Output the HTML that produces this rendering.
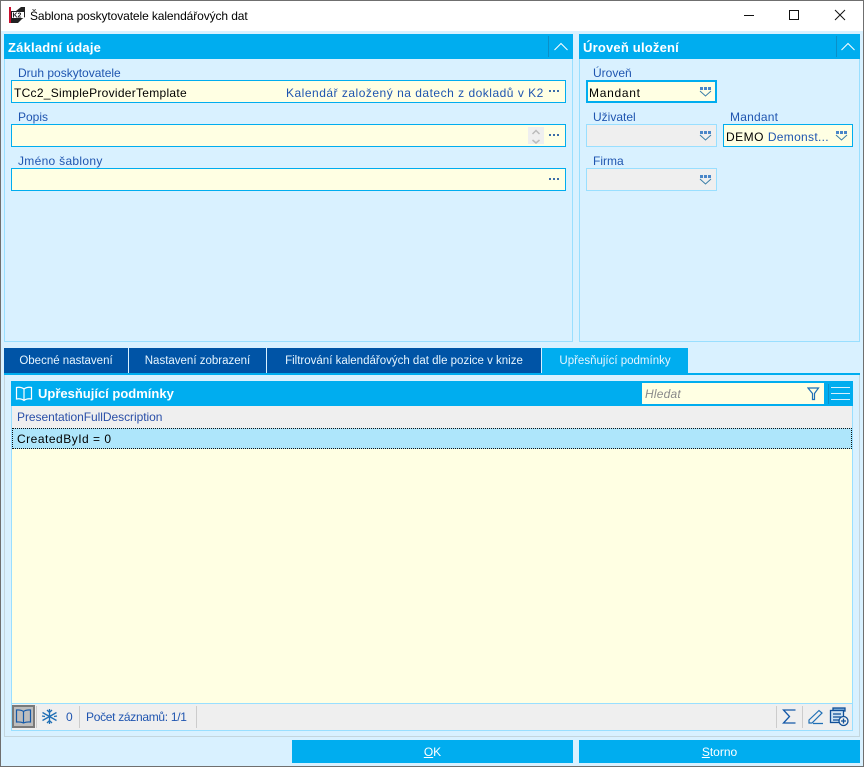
<!DOCTYPE html>
<html><head><meta charset="utf-8"><style>
*{box-sizing:border-box;margin:0;padding:0}
html,body{width:864px;height:767px;overflow:hidden;background:#d9f1ff}
body{position:relative;font-family:"Liberation Sans",sans-serif;font-size:12px;color:#000}
.a,.t,.l,svg.i{position:absolute}
.t{white-space:nowrap;line-height:16px;height:16px}
.l{white-space:nowrap;line-height:16px;height:16px;color:#1f55b0;letter-spacing:0}
.hd{position:absolute;background:#00adef;top:34px;height:25px}
.hd b{position:absolute;left:4px;top:5px;color:#fff;font-size:13px;line-height:17px;letter-spacing:.2px;white-space:nowrap}
.panel{position:absolute;border:1px solid #99dfff;border-top:0;top:59px;height:283px}
.in{position:absolute;background:#ffffe3;border:1px solid #00adef;height:23px}
.dis{background:#efefef;border-color:#99dfff}
.tab{position:absolute;top:348px;height:25px;background:#0054a6;color:#e6f5ff;text-align:center;line-height:26px;letter-spacing:0;white-space:nowrap;font-size:11.5px}
.btn{position:absolute;top:740px;height:23px;background:#00adef;color:#fff;text-align:center;line-height:24px;letter-spacing:0}
</style></head><body>
<div class="a" style="left:0;top:0;width:864px;height:31px;background:#fff"></div>
<div class="a" style="left:0;top:0;width:864px;height:1px;background:#6f6f6f"></div>
<div class="a" style="left:0;top:0;width:1px;height:767px;background:#6f6f6f"></div>
<div class="a" style="left:863px;top:0;width:1px;height:767px;background:#6f6f6f"></div>
<div class="a" style="left:0;top:766px;width:864px;height:1px;background:#6f6f6f"></div>

<svg class="i" style="left:9px;top:7px" width="17" height="17" viewBox="0 0 17 17">
<rect x="0" y="0" width="2" height="16" fill="#c8102e"/>
<rect x="2" y="0" width="14" height="16" fill="#222"/>
<path d="M2 0h10L7 4H2zM16 10v6H9l4-4z" fill="#fff"/>
<rect x="3" y="5" width="12" height="6" fill="#fff"/>
<text x="3.5" y="10.500" font-family="Liberation Sans" font-size="7" font-weight="700" fill="#222">K2</text>
</svg>
<div class="t" style="left:30px;top:8px;letter-spacing:-.1px">Šablona poskytovatele kalendářových dat</div>

<svg class="i" style="left:740px;top:5px" width="110" height="20" viewBox="0 0 110 20" fill="none" stroke="#111" stroke-width="1">
<path d="M4 10.500h10"/>
<rect x="49.500" y="5.500" width="9" height="9"/>
<path d="M95 5l10 10M105 5L95 15"/>
</svg>

<!-- left panel -->
<div class="panel" style="left:4px;width:569px"></div>
<div class="hd" style="left:4px;width:569px"><b>Základní údaje</b>
<div class="a" style="left:544px;top:2px;width:1px;height:21px;background:#0a8fc8"></div>
<svg class="i" style="left:549px;top:8px" width="16" height="10" fill="none" stroke="#fff" stroke-width="1"><path d="M1.500 8L8 1.500 14.500 8"/></svg>
</div>
<div class="l" style="left:18px;top:65px">Druh poskytovatele</div>
<div class="in" style="left:11px;top:80px;width:555px"></div>
<div class="t" style="left:14px;top:85px;letter-spacing:.28px">TCc2_SimpleProviderTemplate</div>
<div class="t" style="left:286px;top:85px;color:#1f55b0;letter-spacing:.5px">Kalendář založený na datech z dokladů v K2</div>
<div class="l" style="left:18px;top:109px">Popis</div>
<div class="in" style="left:11px;top:124px;width:555px"></div>
<div class="a" style="left:528px;top:127px;width:16px;height:17px;background:#efefef"></div>
<svg class="i" style="left:528px;top:127px" width="16" height="17" fill="none" stroke="#bbb" stroke-width="1.500"><path d="M4.500 7L8 3.500 11.500 7M4.500 13L8 16 11.500 13"/></svg>
<div class="l" style="left:18px;top:153px;letter-spacing:.3px">Jméno šablony</div>
<div class="in" style="left:11px;top:168px;width:555px"></div>
<svg class="i" style="left:549px;top:90px" width="13" height="3" fill="#3b6ca8"><rect x="0" y="0" width="2" height="2"/><rect x="4" y="0" width="2" height="2"/><rect x="8" y="0" width="2" height="2"/></svg>
<svg class="i" style="left:549px;top:134px" width="13" height="3" fill="#3b6ca8"><rect x="0" y="0" width="2" height="2"/><rect x="4" y="0" width="2" height="2"/><rect x="8" y="0" width="2" height="2"/></svg>
<svg class="i" style="left:549px;top:178px" width="13" height="3" fill="#3b6ca8"><rect x="0" y="0" width="2" height="2"/><rect x="4" y="0" width="2" height="2"/><rect x="8" y="0" width="2" height="2"/></svg>

<!-- right panel -->
<div class="panel" style="left:579px;width:281px"></div>
<div class="hd" style="left:579px;width:281px"><b style="left:4px">Úroveň uložení</b>
<div class="a" style="left:257px;top:2px;width:1px;height:21px;background:#0a8fc8"></div>
<svg class="i" style="left:261px;top:8px" width="16" height="10" fill="none" stroke="#fff" stroke-width="1"><path d="M1.500 8L8 1.500 14.500 8"/></svg>
</div>
<div class="l" style="left:593px;top:65px">Úroveň</div>
<div class="in" style="left:586px;top:80px;width:131px;border-width:2px"></div>
<div class="t" style="left:589px;top:85px;letter-spacing:.7px">Mandant</div>
<div class="l" style="left:593px;top:109px">Uživatel</div>
<div class="in dis" style="left:586px;top:124px;width:131px"></div>
<div class="l" style="left:730px;top:109px;letter-spacing:.2px">Mandant</div>
<div class="in" style="left:723px;top:124px;width:130px"></div>
<div class="t" style="left:726px;top:129px;letter-spacing:.5px">DEMO <span style="color:#1f55b0;letter-spacing:.3px">Demonst...</span></div>
<div class="l" style="left:593px;top:153px">Firma</div>
<div class="in dis" style="left:586px;top:168px;width:131px"></div>
<svg class="i" style="left:699px;top:86px" width="13" height="11"><g fill="#4a86c8"><rect x="1" y="1" width="3" height="3"/><rect x="5" y="1" width="3" height="3"/><rect x="9" y="1" width="3" height="3"/></g><path d="M1 5l5.500 5L12 5" fill="none" stroke="#3a7fa8"/></svg>
<svg class="i" style="left:699px;top:130px" width="13" height="11"><g fill="#4a86c8"><rect x="1" y="1" width="3" height="3"/><rect x="5" y="1" width="3" height="3"/><rect x="9" y="1" width="3" height="3"/></g><path d="M1 5l5.500 5L12 5" fill="none" stroke="#3a7fa8"/></svg>
<svg class="i" style="left:699px;top:174px" width="13" height="11"><g fill="#4a86c8"><rect x="1" y="1" width="3" height="3"/><rect x="5" y="1" width="3" height="3"/><rect x="9" y="1" width="3" height="3"/></g><path d="M1 5l5.500 5L12 5" fill="none" stroke="#3a7fa8"/></svg>
<svg class="i" style="left:835px;top:130px" width="13" height="11"><g fill="#4a86c8"><rect x="1" y="1" width="3" height="3"/><rect x="5" y="1" width="3" height="3"/><rect x="9" y="1" width="3" height="3"/></g><path d="M1 5l5.500 5L12 5" fill="none" stroke="#3a7fa8"/></svg>

<!-- tabs -->
<div class="tab" style="left:4px;width:124px">Obecné nastavení</div>
<div class="tab" style="left:129px;width:137px">Nastavení zobrazení</div>
<div class="tab" style="left:267px;width:274px">Filtrování kalendářových dat dle pozice v knize</div>
<div class="tab" style="left:542px;width:146px;background:#00adef">Upřesňující podmínky</div>
<div class="a" style="left:4px;top:373px;width:856px;height:2px;background:#00adef"></div>

<!-- lower panel -->
<div class="a" style="left:4px;top:375px;width:856px;height:362px;border:1px solid #c4d6de;border-top:0"></div>
<div class="a" style="left:11px;top:381px;width:842px;height:350px;background:#ffffe3;border:1px solid #99dfff"></div>
<div class="a" style="left:11px;top:381px;width:842px;height:25px;background:#00adef"></div>
<svg class="i" style="left:15px;top:386px" width="18" height="16" fill="none" stroke="#fff" stroke-width="1.200"><path d="M9 3C7 1.500 4 1 1.500 1.500V13C4 12.500 7 13 9 14.500 11 13 14 12.500 16.500 13V1.500C14 1 11 1.500 9 3ZM9 3V14.500"/></svg>
<div class="t" style="left:38px;top:386px;color:#fff;font-weight:700;font-size:13px;letter-spacing:0">Upřesňující podmínky</div>
<div class="a" style="left:642px;top:383px;width:182px;height:21px;background:#ffffe3"></div>
<div class="t" style="left:645px;top:386px;font-style:italic;color:#8a8a8a;letter-spacing:.2px">Hledat</div>
<svg class="i" style="left:807px;top:387px" width="13" height="14" fill="none" stroke="#1f6fb5" stroke-width="1.200"><path d="M1 1h10.500L7.500 6.500V12.500H5.500V6.500Z"/></svg>
<div class="a" style="left:828px;top:384px;width:1px;height:20px;background:#0a8fc8"></div>
<div class="a" style="left:831px;top:387px;width:19px;height:1px;background:#d9f1ff"></div>
<div class="a" style="left:831px;top:393px;width:19px;height:1px;background:#d9f1ff"></div>
<div class="a" style="left:831px;top:399px;width:19px;height:1px;background:#d9f1ff"></div>

<div class="a" style="left:12px;top:406px;width:840px;height:22px;background:#efefef"></div>
<div class="l" style="left:17px;top:409px;color:#2a4fa8;letter-spacing:-.05px">PresentationFullDescription</div>
<div class="a" style="left:12px;top:428px;width:840px;height:21px;background:#aee6fb;border:1px dotted #111"></div>
<div class="t" style="left:17px;top:431px;letter-spacing:.5px">CreatedById = 0</div>

<!-- footer -->
<div class="a" style="left:11px;top:703px;width:842px;height:1px;background:#99dfff"></div>
<div class="a" style="left:12px;top:704px;width:840px;height:26px;background:#efefef"></div>
<div class="a" style="left:12px;top:705px;width:23px;height:23px;background:#bdbdbd;border:2px solid #7a7a7a"></div>
<svg class="i" style="left:15px;top:709px" width="17" height="15" fill="none" stroke="#1459a8" stroke-width="1.200"><path d="M8.500 2.500C6.500 1 4 .8 1.500 1V13C4 12.800 6.500 13 8.500 14 10.500 13 13 12.800 15.500 13V1C13 .8 10.500 1 8.500 2.500ZM8.500 2.500V14"/></svg>
<div class="a" style="left:36px;top:706px;width:1px;height:22px;background:#ccc"></div>
<svg class="i" style="left:41px;top:708px" width="17" height="17" fill="none" stroke="#1f6fb5" stroke-width="1.300"><path d="M8.500 1v15M1.500 4.500l14 8M15.500 4.500l-14 8M6 2l2.500 2.500L11 2M6 15l2.500-2.500L11 15M1 8l3 .5M16 8l-3 .5"/></svg>
<div class="t" style="left:66px;top:709px;color:#1f55b0">0</div>
<div class="a" style="left:79px;top:706px;width:1px;height:22px;background:#ccc"></div>
<div class="t" style="left:86px;top:709px;color:#1f55b0;letter-spacing:-.3px">Počet záznamů: 1/1</div>
<div class="a" style="left:196px;top:706px;width:1px;height:22px;background:#ccc"></div>
<div class="a" style="left:776px;top:706px;width:1px;height:22px;background:#ccc"></div>
<svg class="i" style="left:782px;top:708px" width="15" height="17" fill="none" stroke="#1459a8" stroke-width="1.300"><path d="M13.500 2H1.500L7.500 8.500 1.500 15H13.500"/></svg>
<div class="a" style="left:802px;top:706px;width:1px;height:22px;background:#ccc"></div>
<svg class="i" style="left:807px;top:708px" width="18" height="18" fill="none" stroke="#1f6fb5" stroke-width="1.200"><path d="M2 12L12 2.500l3 2.500L5 15H2ZM6 15.500h10"/></svg>
<svg class="i" style="left:829px;top:707px" width="21" height="20" fill="none" stroke="#0f4f98" stroke-width="1.300"><rect x="4" y="1" width="12" height="3" fill="#7fb0dd"/><rect x="1.500" y="3.500" width="13" height="12" fill="#cfe2f3"/><path d="M4 7h8M4 10h8M4 13h6"/><circle cx="14.500" cy="14" r="4.500" fill="#efefef"/><path d="M12 14h5M14.500 11.500v5"/></svg>

<!-- buttons -->
<div class="btn" style="left:292px;width:281px"><u>O</u>K</div>
<div class="btn" style="left:579px;width:281px"><u>S</u>torno</div>
</body></html>
